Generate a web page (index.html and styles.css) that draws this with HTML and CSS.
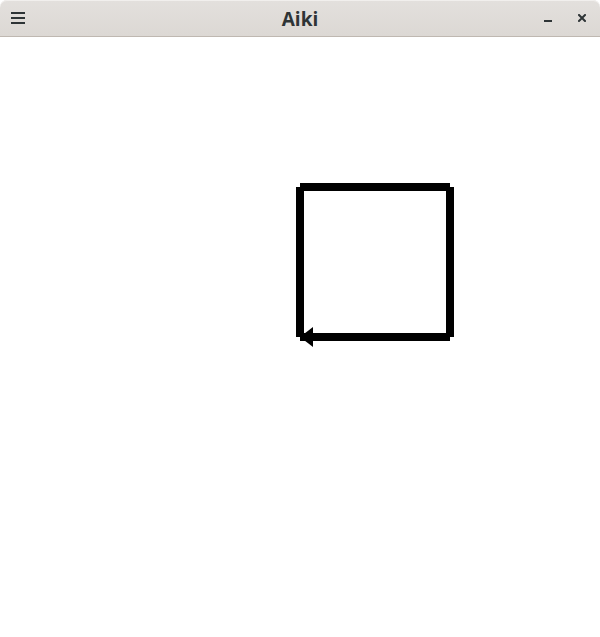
FILE: index.html
```html
<!DOCTYPE html>
<html>
<head>
<meta charset="utf-8">
<title>Aiki</title>
<link rel="stylesheet" href="styles.css">
</head>
<body>
<div class="window">
  <header class="titlebar">
    <div class="menu-btn" aria-label="Menu">
      <span class="bar"></span><span class="bar"></span><span class="bar"></span>
    </div>
    <div class="title">Aiki</div>
    <div class="controls">
      <span class="minimize" aria-label="Minimize"></span>
      <svg class="close" width="8" height="8" viewBox="0 0 8 8" aria-label="Close">
        <path d="M1 1 L7 7 M7 1 L1 7" stroke="#2e3436" stroke-width="2" stroke-linecap="square"/>
      </svg>
    </div>
  </header>
  <main class="canvas">
    <svg class="drawing" width="600" height="600" viewBox="0 0 600 600">
      <g stroke="#000" stroke-width="8" stroke-linecap="butt" fill="none">
        <line x1="300" y1="300" x2="300" y2="150"/>
        <line x1="300" y1="150" x2="450" y2="150"/>
        <line x1="450" y1="150" x2="450" y2="300"/>
        <line x1="450" y1="300" x2="300" y2="300"/>
      </g>
      <polygon points="300,300 313,290 313,310" fill="#000"/>
    </svg>
  </main>
</div>
</body>
</html>
```
FILE: styles.css
```css
html, body {
  margin: 0;
  padding: 0;
  background: #ffffff;
}
body {
  font-family: "Open Sans", "DejaVu Sans", sans-serif;
}
.window {
  width: 600px;
  height: 637px;
  display: flex;
  flex-direction: column;
  background: #ffffff;
}
.titlebar {
  flex: 0 0 auto;
  height: 37px;
  box-sizing: border-box;
  border-bottom: 1px solid #bfb8b1;
  border-radius: 7px 7px 0 0;
  background: linear-gradient(#e3e0dd, #dcd8d4);
  box-shadow: inset 0 1px 0 #f1efed;
  display: grid;
  grid-template-columns: 1fr auto 1fr;
  align-items: center;
}
.menu-btn {
  justify-self: start;
  margin-left: 11px;
  display: flex;
  flex-direction: column;
  gap: 3px;
  width: 14px;
}
.bar {
  display: block;
  height: 2px;
  background: #2e3436;
}
.title {
  font-weight: 700;
  font-size: 19px;
  color: #2e3436;
  line-height: 1;
  padding-top: 2px;
}
.controls {
  justify-self: end;
  display: flex;
  align-items: center;
  margin-right: 14px;
  gap: 26px;
}
.minimize {
  display: block;
  width: 8px;
  height: 2px;
  background: #2e3436;
  margin-top: 6px;
}
.close {
  display: block;
}
.canvas {
  flex: 1 1 auto;
  background: #ffffff;
  overflow: hidden;
}
.drawing {
  display: block;
}
```
